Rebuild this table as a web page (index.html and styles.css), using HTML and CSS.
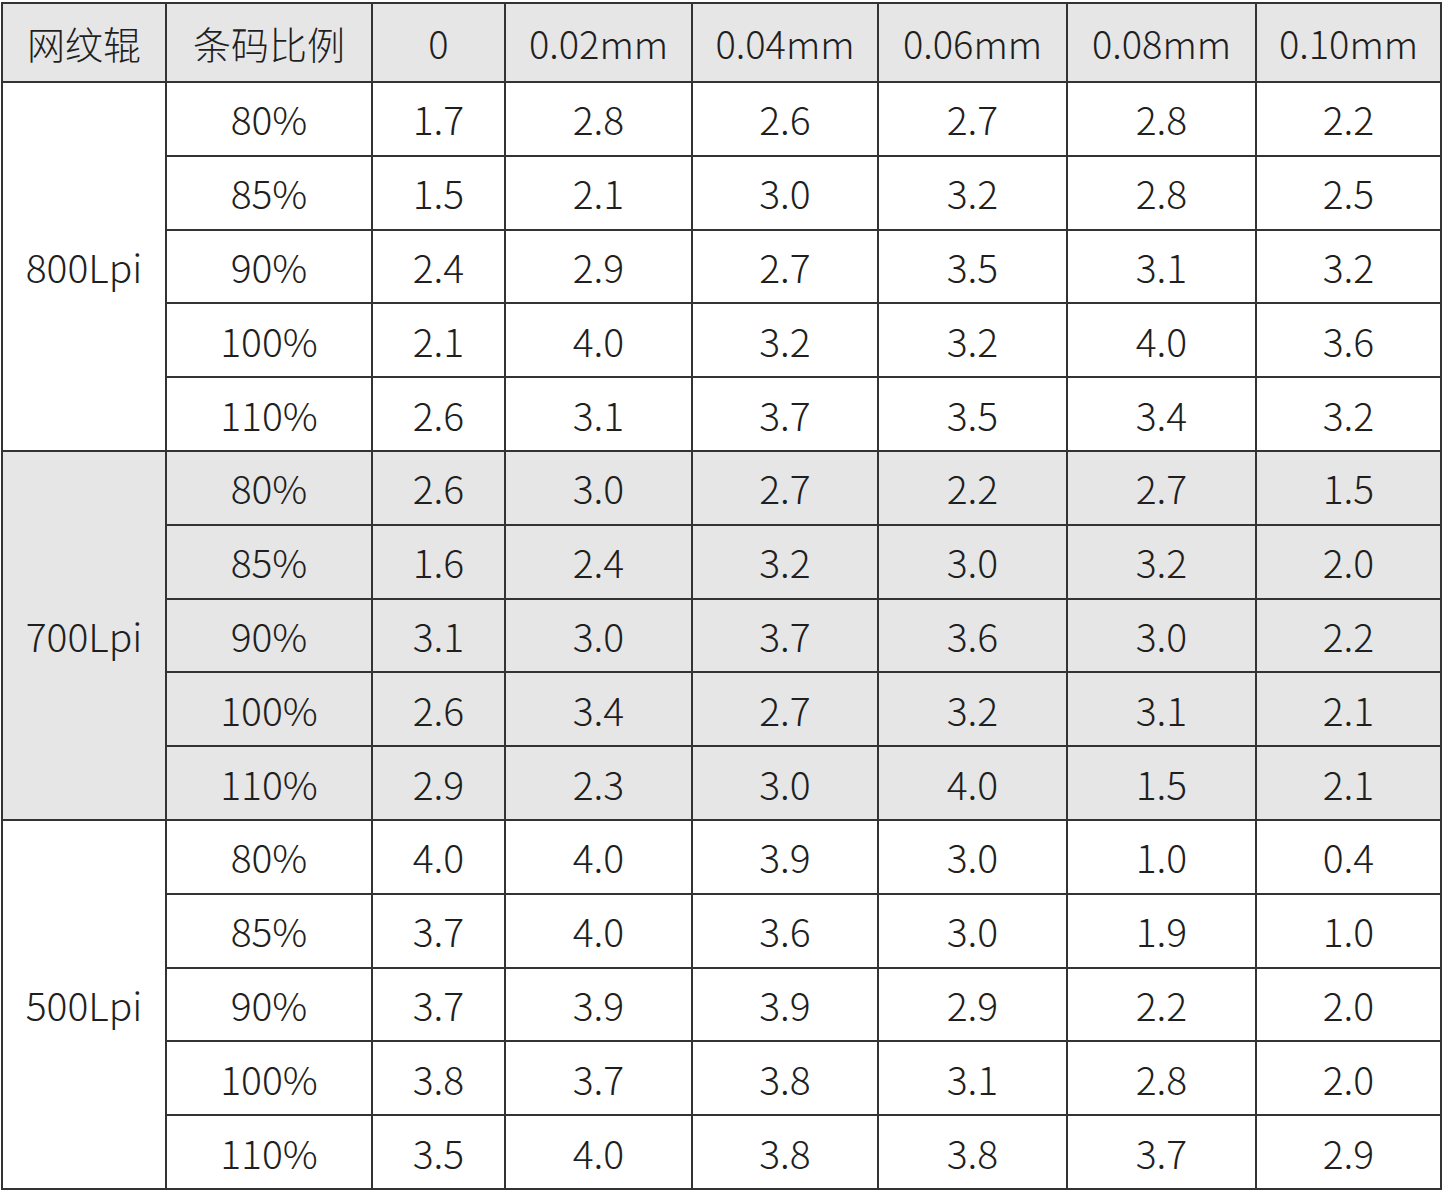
FILE: index.html
```html
<!DOCTYPE html>
<html lang="zh-CN">
<head>
<meta charset="utf-8">
<title>网纹辊 条码比例</title>
<link rel="stylesheet" href="styles.css">
</head>
<body>
<div class="wrap">
<table class="grid">
<colgroup>
<col class="c1"><col class="c2"><col class="c3"><col class="c4"><col class="c5"><col class="c6"><col class="c7"><col class="c8">
</colgroup>
<thead>
<tr class="head"><th>网纹辊</th><th>条码比例</th><th>0</th><th>0.02mm</th><th>0.04mm</th><th>0.06mm</th><th>0.08mm</th><th>0.10mm</th></tr>
</thead>
<tbody class="grp">
<tr><td class="lpi" rowspan="5">800Lpi</td><td>80%</td><td>1.7</td><td>2.8</td><td>2.6</td><td>2.7</td><td>2.8</td><td>2.2</td></tr>
<tr><td>85%</td><td>1.5</td><td>2.1</td><td>3.0</td><td>3.2</td><td>2.8</td><td>2.5</td></tr>
<tr><td>90%</td><td>2.4</td><td>2.9</td><td>2.7</td><td>3.5</td><td>3.1</td><td>3.2</td></tr>
<tr><td>100%</td><td>2.1</td><td>4.0</td><td>3.2</td><td>3.2</td><td>4.0</td><td>3.6</td></tr>
<tr><td>110%</td><td>2.6</td><td>3.1</td><td>3.7</td><td>3.5</td><td>3.4</td><td>3.2</td></tr>
</tbody>
<tbody class="grp shade">
<tr><td class="lpi" rowspan="5">700Lpi</td><td>80%</td><td>2.6</td><td>3.0</td><td>2.7</td><td>2.2</td><td>2.7</td><td>1.5</td></tr>
<tr><td>85%</td><td>1.6</td><td>2.4</td><td>3.2</td><td>3.0</td><td>3.2</td><td>2.0</td></tr>
<tr><td>90%</td><td>3.1</td><td>3.0</td><td>3.7</td><td>3.6</td><td>3.0</td><td>2.2</td></tr>
<tr><td>100%</td><td>2.6</td><td>3.4</td><td>2.7</td><td>3.2</td><td>3.1</td><td>2.1</td></tr>
<tr><td>110%</td><td>2.9</td><td>2.3</td><td>3.0</td><td>4.0</td><td>1.5</td><td>2.1</td></tr>
</tbody>
<tbody class="grp">
<tr><td class="lpi" rowspan="5">500Lpi</td><td>80%</td><td>4.0</td><td>4.0</td><td>3.9</td><td>3.0</td><td>1.0</td><td>0.4</td></tr>
<tr><td>85%</td><td>3.7</td><td>4.0</td><td>3.6</td><td>3.0</td><td>1.9</td><td>1.0</td></tr>
<tr><td>90%</td><td>3.7</td><td>3.9</td><td>3.9</td><td>2.9</td><td>2.2</td><td>2.0</td></tr>
<tr><td>100%</td><td>3.8</td><td>3.7</td><td>3.8</td><td>3.1</td><td>2.8</td><td>2.0</td></tr>
<tr><td>110%</td><td>3.5</td><td>4.0</td><td>3.8</td><td>3.8</td><td>3.7</td><td>2.9</td></tr>
</tbody>
</table>
</div>
</body>
</html>
```

FILE: styles.css
```css
html, body {
  margin: 0;
  padding: 0;
  background: #ffffff;
}

.wrap {
  padding: 2px 0 0 1px;
}

.grid {
  border-collapse: collapse;
  table-layout: fixed;
  width: 1439px;
  font-family: "Noto Sans CJK SC Light", "Noto Sans CJK SC", "Noto Sans", sans-serif;
  font-weight: 300;
  color: #1f1f1f;
}

.c1 { width: 164px; }
.c2 { width: 206px; }
.c3 { width: 133px; }
.c4 { width: 187px; }
.c5 { width: 186px; }
.c6 { width: 189px; }
.c7 { width: 189px; }
.c8 { width: 185px; }

.grid th,
.grid td {
  border: 2px solid #333333;
  text-align: center;
  vertical-align: middle;
  padding: 0;
  white-space: nowrap;
  line-height: 1;
}

.head th {
  height: 77px;
  background: #e6e6e6;
  font-size: 38px;
  font-weight: 300;
}

.grid td {
  height: 71.8px;
  font-size: 39px;
}

.shade td {
  background: #e6e6e6;
}
```
